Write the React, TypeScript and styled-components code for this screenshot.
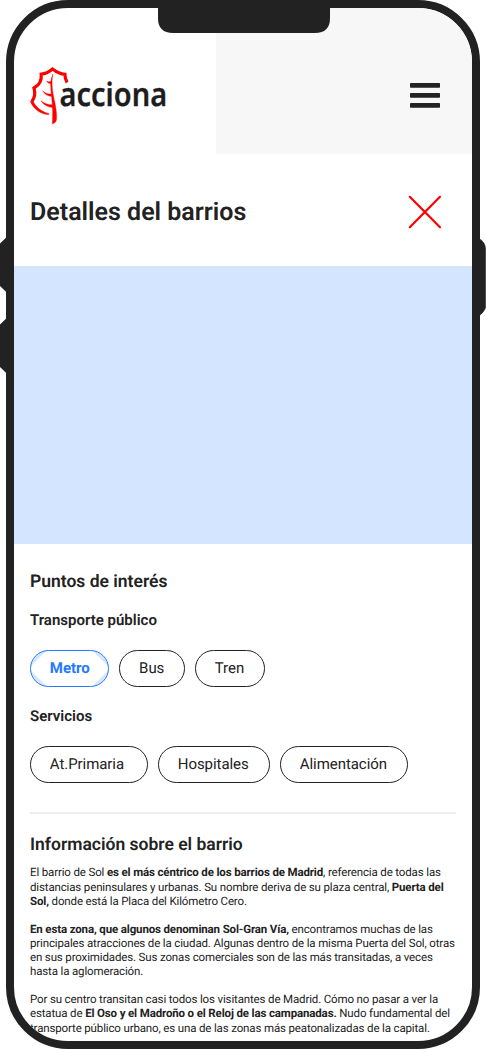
import React from "react";
import styled, { createGlobalStyle } from "styled-components";

const GlobalStyle = createGlobalStyle`
  * { box-sizing: border-box; }
  body { margin: 0; background: #fff; overflow: hidden; }
  h1, h2, h3, p { margin: 0; }
`;

const ink = "#222222";

const Stage = styled.div`
  position: relative;
  width: 486px;
  height: 1049px;
  padding: 0 6px;
  overflow: hidden;
  font-family: Roboto, "Liberation Sans", sans-serif;
  text-rendering: geometricPrecision;
  color: ${ink};
`;

const Hardware = styled.svg`
  position: absolute;
  inset: 0;
  pointer-events: none;
`;

const Phone = styled.main`
  position: relative;
  display: flex;
  flex-direction: column;
  width: 474.3px;
  height: 1049px;
  border: 8px solid ${ink};
  border-radius: 62px;
  background: #fff;
  overflow: hidden;
`;

const Header = styled.header`
  display: flex;
  flex: 0 0 146.3px;
`;

const Brand = styled.div`
  flex: 0 0 202.4px;
  padding: 56px 0 0 14px;
`;

const MenuArea = styled.div`
  flex: 1;
  display: flex;
  justify-content: flex-end;
  padding: 75px 32px 0 0;
  background: #f7f7f7;
`;

const IconButton = styled.button`
  display: block;
  align-self: flex-start;
  padding: 0;
  border: 0;
  background: none;
  line-height: 0;
`;

const TitleBar = styled.section`
  display: flex;
  justify-content: space-between;
  flex: 0 0 112px;
  padding: 41px 30px 0 16px;
`;

const Title = styled.h1`
  font-size: 25px;
  line-height: 35px;
  font-weight: 600;
`;

const MapArea = styled.div`
  flex: 0 0 278px;
  background: #d4e5ff;
`;

const Content = styled.section`
  flex: 1 0 auto;
  padding: 25.5px 16px 0;
`;

const Heading = styled.h2`
  font-size: 17.5px;
  line-height: 24px;
  font-weight: 600;
`;

const Subheading = styled.h3<{ $top: number }>`
  margin-top: ${(p) => p.$top}px;
  font-size: 15px;
  line-height: 20px;
  font-weight: 600;
`;

const Chips = styled.div`
  display: flex;
  gap: 10px;
  margin-top: 19.3px;
`;

const Chip = styled.button<{ $width: number; $active?: boolean }>`
  width: ${(p) => p.$width}px;
  height: 37px;
  padding: 0 0 1px 18.8px;
  border: 1.3px solid ${(p) => (p.$active ? "#2479ff" : ink)};
  border-radius: 19px;
  background: ${(p) =>
    p.$active
      ? ["135deg", "225deg", "45deg", "315deg"]
          .map((a) => `linear-gradient(${a}, #d4e5ff 10.4px, transparent 11px)`)
          .join(", ")
      : "#fff"};
  color: ${(p) => (p.$active ? "#2479ff" : ink)};
  font-family: inherit;
  font-size: 15px;
  text-rendering: inherit;
  text-align: left;
  font-weight: ${(p) => (p.$active ? 700 : 400)};
  letter-spacing: ${(p) => (p.$active ? 0 : -0.06)}px;
  white-space: nowrap;
`;

const Divider = styled.hr`
  height: 2px;
  margin: 29px 0 19.5px;
  border: 0;
  background: #eeeeee;
`;

const Copy = styled.div`
  display: flex;
  flex-direction: column;
  gap: 14.1px;
  margin-top: 8.3px;
`;

const Line = styled.p`
  font-size: 11.5px;
  line-height: 14.1px;
  letter-spacing: -0.143px;
  white-space: nowrap;
  b { font-weight: 700; }
`;

function Logo() {
  return (
    <svg width="160" height="62" viewBox="28 64 160 62" role="img">
      <g fill="none" stroke="#f00" strokeLinejoin="miter">
        <path strokeWidth="3.2" d="M67.2 82.5Q64.9 79 64.9 74.3Q59 74 52.5 69Q47 73.7 41.2 74.2Q42.3 83.3 34 88Q36.2 96 31.8 101.5" />
      </g>
      <g fill="#f00" stroke="#f00" strokeWidth=".35">
        <path d="M30.3 101.5L33 100.8C36 107.5 41 111.2 49 113.7L48.8 114.7C40 113.7 34 109.8 30.3 101.5Z" />
        <path d="M52.9 74C50.8 79 50.3 83 50.8 88.5C51.2 97 53.5 106 52.3 123.9C55.5 122.8 56.4 121.5 56.6 118.5C57 107 53.3 99 52.3 88C51.9 83 52 79 52.9 74Z" />
        <path d="M46.5 81.1C48 82 49.5 82 51 81.5L51.2 84C49 83.8 47.6 82.8 46.5 81.1Z" />
        <path d="M42.6 90.8C46 93.7 48.5 94.5 51.5 93.9L52 96.4C48 96.4 44.8 94.6 42.6 90.8Z" />
        <path d="M41 100.8C44.5 103.7 49 105.2 53.1 104.8L53.3 107.6C48 107.2 43.3 105 41 100.8Z" />
      </g>
      <text transform="translate(59.6 105.6) scale(.889 1)" fill="#1d1d1d" stroke="#1d1d1d" strokeWidth=".3" fontFamily="Noto Sans, sans-serif" fontSize="32.6" fontWeight="600">acciona</text>
    </svg>
  );
}

export default function App() {
  return (
    <>
      <GlobalStyle />
      <Stage>
        <Hardware width="486" height="1049" fill={ink}>
          <path d="M8 235.7L0 243.5V286L8 293.7ZM8 316.7L0 324.5V367L8 374.7ZM478 237.5Q485.8 242 485.8 249V308Q483 314 478 316.5Z" />
        </Hardware>
        <Phone>
          <Header>
            <Brand><Logo /></Brand>
            <MenuArea>
              <IconButton aria-label="Menú">
                <svg width="30" height="26" fill={ink}>
                  <rect y="0" width="30" height="4.7" rx=".7" />
                  <rect y="10" width="30" height="4.7" rx=".7" />
                  <rect y="20" width="30" height="4.7" rx=".7" />
                </svg>
              </IconButton>
            </MenuArea>
          </Header>
          <TitleBar>
            <Title>Detalles del barrios</Title>
            <IconButton aria-label="Cerrar">
              <svg width="34" height="34" stroke="#f00" strokeWidth="2.2" strokeLinecap="round">
                <path d="M1.8 1.8L32 32.2M32 1.8L1.8 32.2" />
              </svg>
            </IconButton>
          </TitleBar>
          <MapArea />
          <Content>
            <Heading>Puntos de interés</Heading>
            <Subheading $top={16.5}>Transporte público</Subheading>
            <Chips>
              <Chip $width={79.3} $active>Metro</Chip>
              <Chip $width={65.7}>Bus</Chip>
              <Chip $width={69.8}>Tren</Chip>
            </Chips>
            <Subheading $top={19.8}>Servicios</Subheading>
            <Chips>
              <Chip $width={118}>At.Primaria</Chip>
              <Chip $width={112}>Hospitales</Chip>
              <Chip $width={128}>Alimentación</Chip>
            </Chips>
            <Divider />
            <Heading>Información sobre el barrio</Heading>
            <Copy>
              <div>
                <Line>El barrio de Sol <b>es el más céntrico de los barrios de Madrid</b>, referencia de todas las</Line>
                <Line>distancias peninsulares y urbanas. Su nombre deriva de su plaza central, <b>Puerta del</b></Line>
                <Line><b>Sol,</b> donde está la Placa del Kilómetro Cero.</Line>
              </div>
              <div>
                <Line><b>En esta zona, que algunos denominan Sol-Gran Vía,</b> encontramos muchas de las</Line>
                <Line>principales atracciones de la ciudad. Algunas dentro de la misma Puerta del Sol, otras</Line>
                <Line>en sus proximidades. Sus zonas comerciales son de las más transitadas, a veces</Line>
                <Line>hasta la aglomeración.</Line>
              </div>
              <div>
                <Line>Por su centro transitan casi todos los visitantes de Madrid. Cómo no pasar a ver la</Line>
                <Line>estatua de <b>El Oso y el Madroño o el Reloj de las campanadas.</b> Nudo fundamental del</Line>
                <Line>transporte público urbano, es una de las zonas más peatonalizadas de la capital.</Line>
              </div>
            </Copy>
          </Content>
        </Phone>
        <Hardware width="486" height="40" fill={ink}>
          <path d="M158 0H330V18Q330 33 315 33H173Q158 33 158 18Z" />
        </Hardware>
      </Stage>
    </>
  );
}
